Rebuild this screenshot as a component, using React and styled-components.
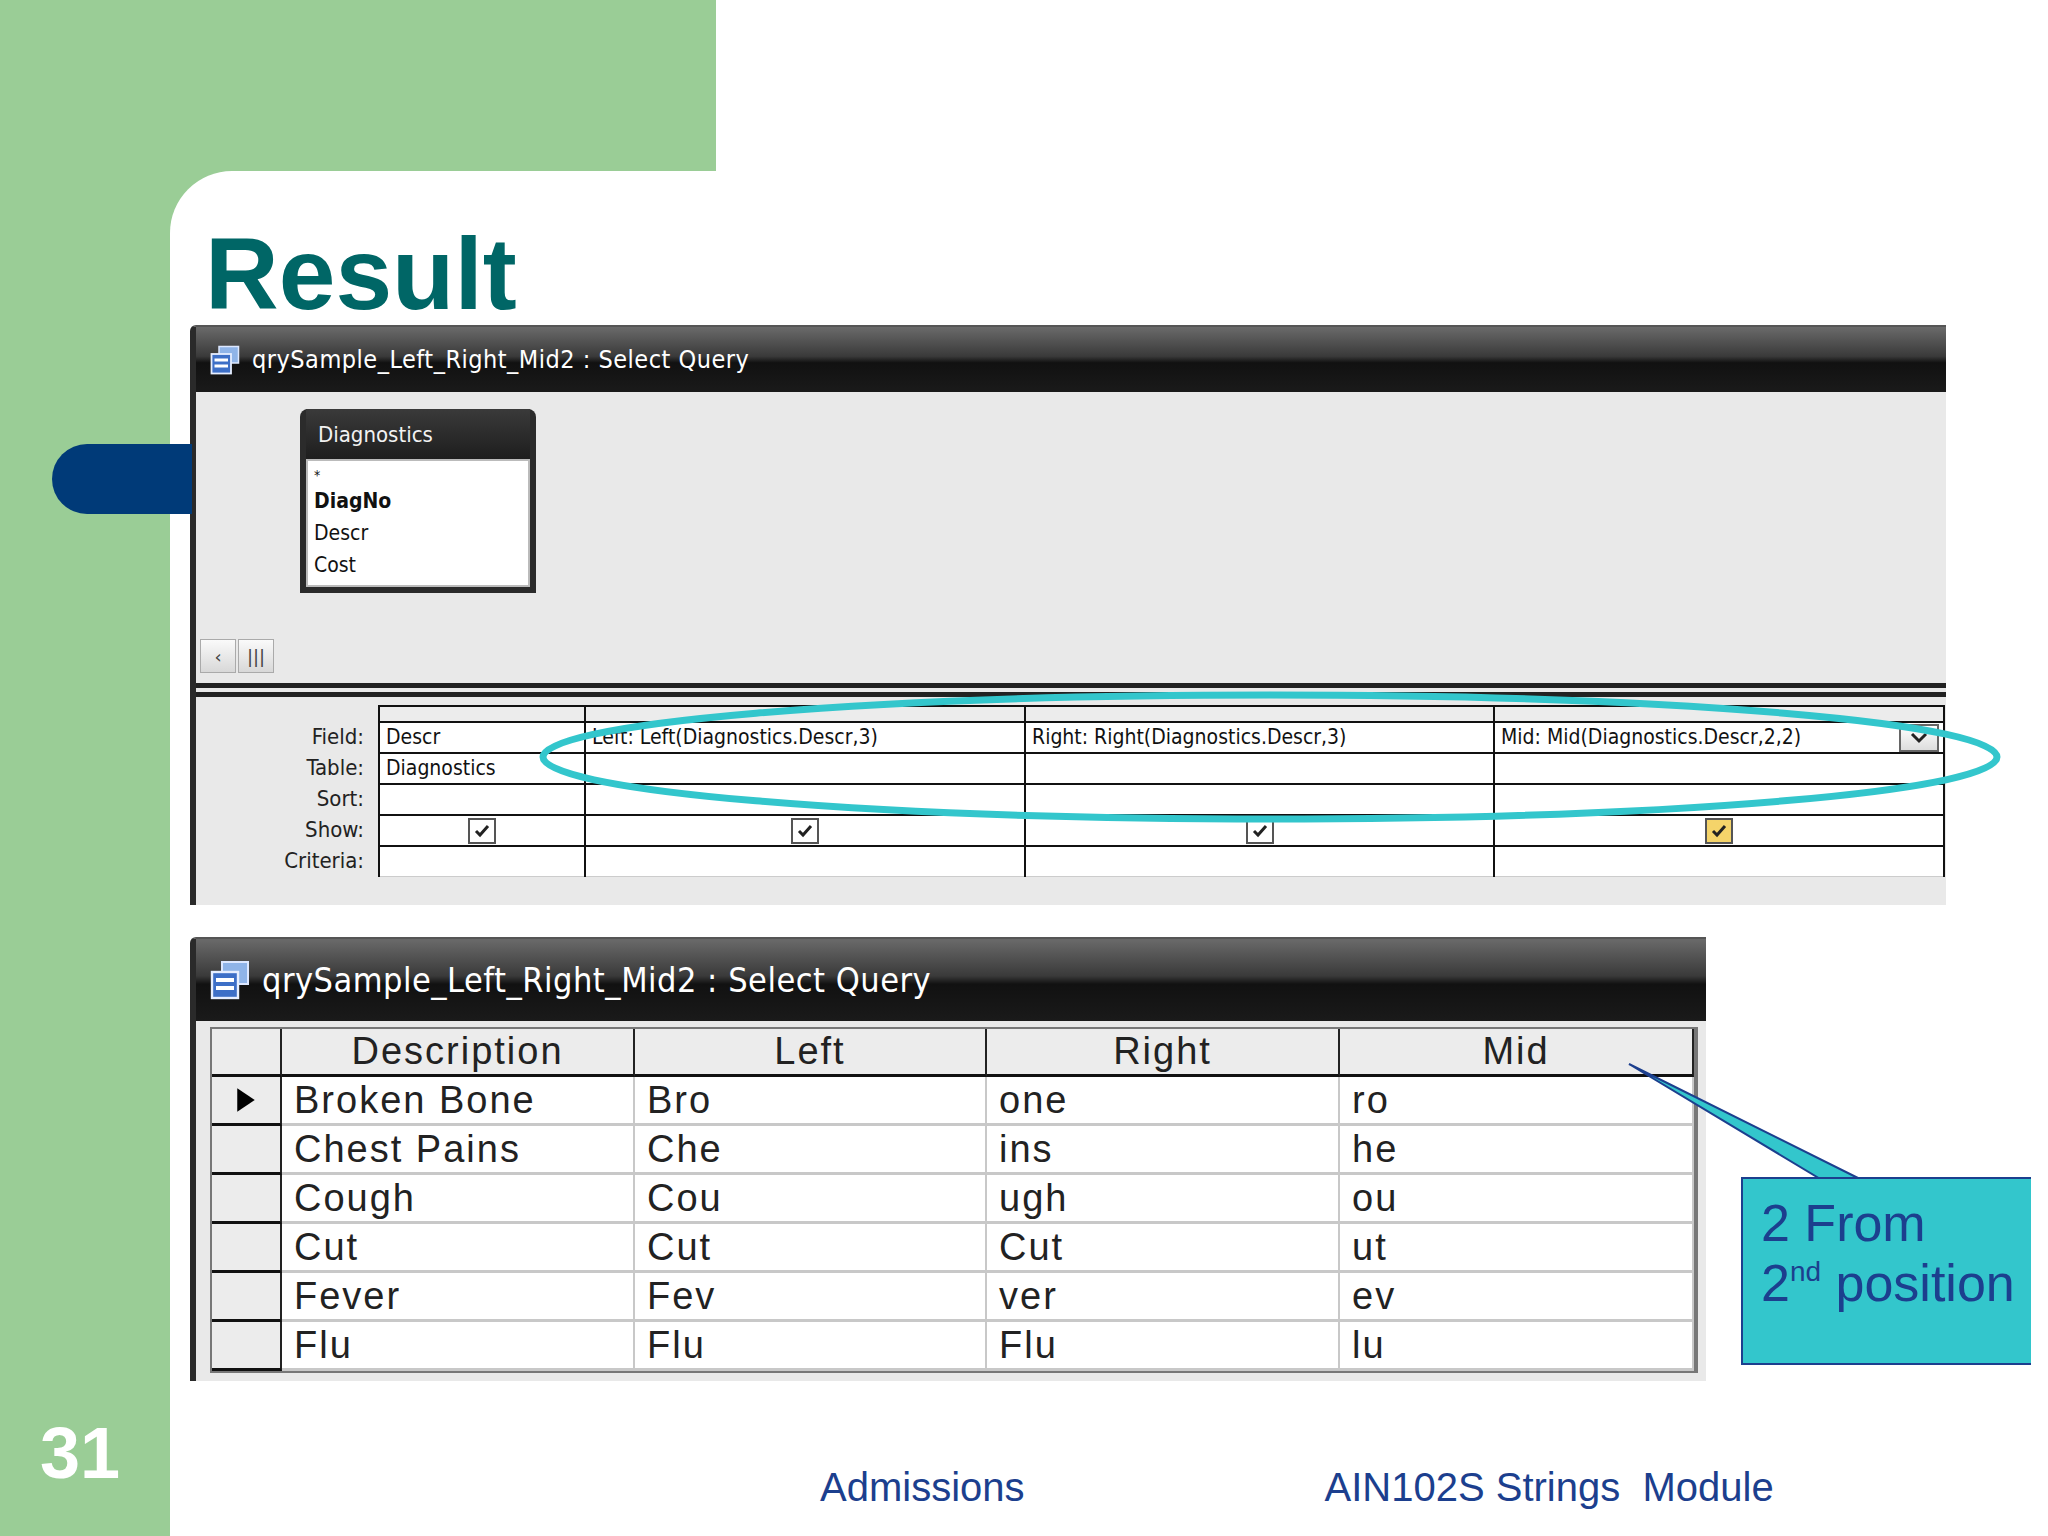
import styled, { createGlobalStyle } from "styled-components";

const Global = createGlobalStyle`
  html, body { margin: 0; padding: 0; background: #fff; }
  body { width: 2048px; height: 1536px; overflow: hidden; }
`;

const GREEN = "#9acd96";
const TEAL = "#33c6cc";
const NAVY = "#1c3f8e";

const Page = styled.div`
  position: relative;
  width: 2048px;
  height: 1536px;
  display: flex;
  font-family: "Liberation Sans", Arial, sans-serif;
  overflow: hidden;
`;

const LeftStrip = styled.div`
  width: 170px;
  flex: none;
  background: ${GREEN};
  display: flex;
  flex-direction: column;
  justify-content: flex-end;
  align-items: center;
  padding-bottom: 42px;
  box-sizing: border-box;
`;

const PageNo = styled.div`
  color: #fff;
  font-size: 72px;
  font-weight: 700;
  margin-right: 10px;
`;

const Main = styled.div`
  flex: 1;
  display: flex;
  flex-direction: column;
`;

const TopRow = styled.div`
  height: 171px;
  display: flex;
`;

const GreenBlock = styled.div`
  width: 546px;
  background: ${GREEN};
`;

const PanelWrap = styled.div`
  flex: 1;
  background: linear-gradient(to right, ${GREEN} 0 546px, #fff 546px);
  display: flex;
`;

const Panel = styled.div`
  flex: 1;
  background: #fff;
  border-top-left-radius: 62px;
  padding: 52px 0 0 20px;
  display: flex;
  flex-direction: column;
`;

const Title = styled.h1`
  margin: 0 0 0 15px;
  font-family: Arial, "Liberation Sans", sans-serif;
  font-size: 102px;
  line-height: 102px;
  font-weight: 700;
  color: #006666;
`;

const Window = styled.div`
  width: ${(p) => p.$w}px;
  background: #e9e9e9;
  border-left: 6px solid #2a2a2a;
  border-top: 2px solid #555;
  border-radius: 6px 0 0 0;
  box-sizing: border-box;
  margin-top: ${(p) => p.$mt || 0}px;
  overflow: hidden;
`;

const TitleBar = styled.div`
  height: ${(p) => p.$h}px;
  background: linear-gradient(#6a6a6a 0%, #3a3a3a 45%, #111 55%, #1a1a1a 100%);
  display: flex;
  align-items: center;
  gap: 12px;
  padding-left: 14px;
  color: #fff;
  font-family: "DejaVu Sans Condensed", "DejaVu Sans", sans-serif;
  font-size: ${(p) => p.$fs}px;
  letter-spacing: 0.5px;
`;

const QueryIcon = ({ size }) => (
  <svg width={size} height={size} viewBox="0 0 20 20">
    <rect x="6" y="1" width="13" height="11" fill="#8fb4e8" stroke="#dde8ff" strokeWidth="1" />
    <rect x="1" y="6" width="13" height="13" fill="#3d6fc7" stroke="#e6eeff" strokeWidth="1.2" />
    <rect x="3" y="9" width="9" height="2" fill="#fff" />
    <rect x="3" y="13" width="9" height="2" fill="#fff" />
  </svg>
);

const Designer = styled.div`
  height: 305px;
  position: relative;
  display: flex;
  flex-direction: column;
  justify-content: space-between;
  padding: 17px 0 0 0;
  box-sizing: border-box;
  border-bottom: 14px double #222;
`;

const TableBox = styled.div`
  margin-left: 104px;
  width: 236px;
  background: #2b2b2b;
  border-radius: 8px 8px 0 0;
  padding: 0 6px 6px;
  box-sizing: border-box;
`;

const TableHead = styled.div`
  height: 50px;
  display: flex;
  align-items: center;
  padding-left: 12px;
  color: #f2f2f2;
  font-family: "DejaVu Sans Condensed", "DejaVu Sans", sans-serif;
  font-size: 22px;
  background: linear-gradient(#3a3a3a, #1e1e1e);
`;

const TableList = styled.div`
  background: #fff;
  border: 2px solid #bbb;
  padding: 4px 6px;
  font-family: "DejaVu Sans Condensed", "DejaVu Sans", sans-serif;
  font-size: 21px;
  line-height: 32px;
  color: #111;
`;

const Field = styled.div`
  font-weight: ${(p) => (p.$bold ? 700 : 400)};
  font-size: ${(p) => (p.$small ? 14 : 21)}px;
  line-height: ${(p) => (p.$small ? 20 : 32)}px;
`;

const ScrollRow = styled.div`
  display: flex;
  gap: 2px;
  padding: 0 0 10px 4px;
`;

const ScrollBtn = styled.div`
  width: ${(p) => p.$w}px;
  height: 32px;
  border: 1px solid #aaa;
  background: linear-gradient(#fafafa, #d8d8d8);
  display: flex;
  align-items: center;
  justify-content: center;
  color: #444;
  font-size: 18px;
  font-family: "DejaVu Sans", sans-serif;
`;

const QbeArea = styled.div`
  display: flex;
  padding-top: 8px;
  height: 200px;
`;

const Labels = styled.div`
  width: 168px;
  padding-top: 16px;
  text-align: right;
  font-family: "DejaVu Sans Condensed", "DejaVu Sans", sans-serif;
  font-size: 22px;
  color: #222;
  padding-right: 14px;
`;

const Label = styled.div`
  height: 31px;
  line-height: 31px;
`;

const QbeGrid = styled.div`
  display: grid;
  grid-template-columns: 206px 440px 469px 450px;
  border-top: 2px solid #111;
  border-left: 2px solid #111;
  background: #fff;
  align-self: flex-start;
`;

const QbeCol = styled.div`
  border-right: 2px solid #111;
  display: flex;
  flex-direction: column;
`;

const QbeHead = styled.div`
  height: 14px;
  background: #ececec;
  border-bottom: 2px solid #111;
`;

const QbeCell = styled.div`
  height: 29px;
  border-bottom: ${(p) => (p.$last ? "1px solid #ccc" : "2px solid #111")};
  font-family: "DejaVu Sans Condensed", "DejaVu Sans", sans-serif;
  font-size: 21px;
  line-height: 29px;
  padding-left: 6px;
  color: #111;
  display: flex;
  align-items: center;
  justify-content: ${(p) => (p.$center ? "center" : "space-between")};
  white-space: nowrap;
  overflow: hidden;
`;

const Check = styled.div`
  width: 24px;
  height: 22px;
  border: 2px solid #555;
  background: ${(p) => (p.$yellow ? "#f5d46a" : "#fff")};
  display: flex;
  align-items: center;
  justify-content: center;
  margin-right: 6px;
`;

const Tick = () => (
  <svg width="16" height="14" viewBox="0 0 16 14">
    <path d="M2 7 L6 11 L14 2" fill="none" stroke="#222" strokeWidth="3" />
  </svg>
);

const DropBtn = styled.div`
  width: 36px;
  height: 24px;
  border: 2px solid #666;
  background: linear-gradient(#fff, #ddd);
  display: flex;
  align-items: center;
  justify-content: center;
  margin-right: 4px;
`;

const Sheet = styled.div`
  margin: 6px 8px 8px 14px;
  display: grid;
  grid-template-columns: 70px 353px 352px 353px 354px;
  border: 2px solid #777;
  border-right-width: 4px;
  background: #fff;
  width: fit-content;
`;

const Cell = styled.div`
  height: ${(p) => (p.$head ? 48 : 49)}px;
  border-right: 2px solid ${(p) => (p.$sel || p.$head ? "#222" : "#c8c8c8")};
  border-bottom: ${(p) => (p.$head ? "3px solid #111" : p.$sel ? "3px solid #111" : "3px solid #c8c8c8")};
  background: ${(p) => (p.$head || p.$sel ? "#ececec" : "#fff")};
  font-family: "Liberation Sans", Arial, sans-serif;
  font-size: 38px;
  letter-spacing: 2px;
  color: #222;
  display: flex;
  align-items: center;
  justify-content: ${(p) => (p.$head ? "center" : "flex-start")};
  padding-left: ${(p) => (p.$head || p.$sel ? 0 : 12)}px;
  box-sizing: border-box;
`;

const Footer = styled.div`
  display: flex;
  margin-top: auto;
  padding: 0 0 26px 630px;
  gap: 300px;
  color: ${NAVY};
  font-size: 40px;
`;

const Pill = styled.div`
  position: absolute;
  left: 52px;
  top: 444px;
  width: 140px;
  height: 70px;
  background: #003a78;
  border-radius: 35px 0 0 35px;
`;

const Overlay = styled.svg`
  position: absolute;
  left: 0;
  top: 0;
  pointer-events: none;
`;

const Callout = styled.div`
  position: absolute;
  left: 1741px;
  top: 1177px;
  width: 290px;
  height: 188px;
  box-sizing: border-box;
  background: ${TEAL};
  border: 2px solid ${NAVY};
  border-right: none;
  padding: 14px 0 0 18px;
  color: ${NAVY};
  font-size: 52px;
  line-height: 60px;
  sup { font-size: 28px; vertical-align: 20px; line-height: 0; }
`;

const rows = [
  ["Broken Bone", "Bro", "one", "ro"],
  ["Chest Pains", "Che", "ins", "he"],
  ["Cough", "Cou", "ugh", "ou"],
  ["Cut", "Cut", "Cut", "ut"],
  ["Fever", "Fev", "ver", "ev"],
  ["Flu", "Flu", "Flu", "lu"],
];

const qbe = [
  { field: "Descr", table: "Diagnostics" },
  { field: "Left: Left(Diagnostics.Descr,3)" },
  { field: "Right: Right(Diagnostics.Descr,3)" },
  { field: "Mid: Mid(Diagnostics.Descr,2,2)", drop: true, yellow: true },
];

export default function App() {
  return (
    <>
      <Global />
      <Page>
        <LeftStrip>
          <PageNo>31</PageNo>
        </LeftStrip>
        <Main>
          <TopRow>
            <GreenBlock />
          </TopRow>
          <PanelWrap>
            <Panel>
              <Title>Result</Title>
              <Window $w={1756}>
                <TitleBar $h={65} $fs={25}>
                  <QueryIcon size={30} />
                  qrySample_Left_Right_Mid2 : Select Query
                </TitleBar>
                <Designer>
                  <TableBox>
                    <TableHead>Diagnostics</TableHead>
                    <TableList>
                      <Field $small>*</Field>
                      <Field $bold>DiagNo</Field>
                      <Field>Descr</Field>
                      <Field>Cost</Field>
                    </TableList>
                  </TableBox>
                  <ScrollRow>
                    <ScrollBtn $w={34}>‹</ScrollBtn>
                    <ScrollBtn $w={34}>|||</ScrollBtn>
                  </ScrollRow>
                </Designer>
                <QbeArea>
                  <Labels>
                    <Label>Field:</Label>
                    <Label>Table:</Label>
                    <Label>Sort:</Label>
                    <Label>Show:</Label>
                    <Label>Criteria:</Label>
                  </Labels>
                  <QbeGrid>
                    {qbe.map((c, i) => (
                      <QbeCol key={i}>
                        <QbeHead />
                        <QbeCell>
                          {c.field}
                          {c.drop && (
                            <DropBtn>
                              <svg width="18" height="12" viewBox="0 0 18 12">
                                <path d="M2 2 L9 9 L16 2" fill="none" stroke="#222" strokeWidth="3" />
                              </svg>
                            </DropBtn>
                          )}
                        </QbeCell>
                        <QbeCell>{c.table || ""}</QbeCell>
                        <QbeCell />
                        <QbeCell $center>
                          <Check $yellow={c.yellow}>
                            <Tick />
                          </Check>
                        </QbeCell>
                        <QbeCell $last />
                      </QbeCol>
                    ))}
                  </QbeGrid>
                </QbeArea>
              </Window>
              <Window $w={1516} $mt={32}>
                <TitleBar $h={82} $fs={34}>
                  <QueryIcon size={40} />
                  qrySample_Left_Right_Mid2 : Select Query
                </TitleBar>
                <Sheet>
                  <Cell $head />
                  {["Description", "Left", "Right", "Mid"].map((h) => (
                    <Cell $head key={h}>{h}</Cell>
                  ))}
                  {rows.map((r, i) => (
                    <>
                      <Cell $sel key={`s${i}`}>
                        {i === 0 && (
                          <svg width="70" height="30" viewBox="0 0 70 30">
                            <path d="M26 3 L44 15 L26 27 Z" fill="#000" />
                          </svg>
                        )}
                      </Cell>
                      {r.map((v, j) => (
                        <Cell key={`${i}-${j}`}>{v}</Cell>
                      ))}
                    </>
                  ))}
                </Sheet>
              </Window>
              <Footer>
                <span>Admissions</span>
                <span>AIN102S Strings&nbsp; Module</span>
              </Footer>
            </Panel>
          </PanelWrap>
        </Main>
        <Pill />
        <Overlay width="2048" height="1536">
          <ellipse cx="1270" cy="757" rx="727" ry="62" fill="none" stroke={TEAL} strokeWidth="7" />
          <polygon points="1629,1064 1822,1180 1862,1180" fill={TEAL} stroke={NAVY} strokeWidth="2" />
        </Overlay>
        <Callout>
          2 From
          <br />
          2<sup>nd</sup> position
        </Callout>
      </Page>
    </>
  );
}
